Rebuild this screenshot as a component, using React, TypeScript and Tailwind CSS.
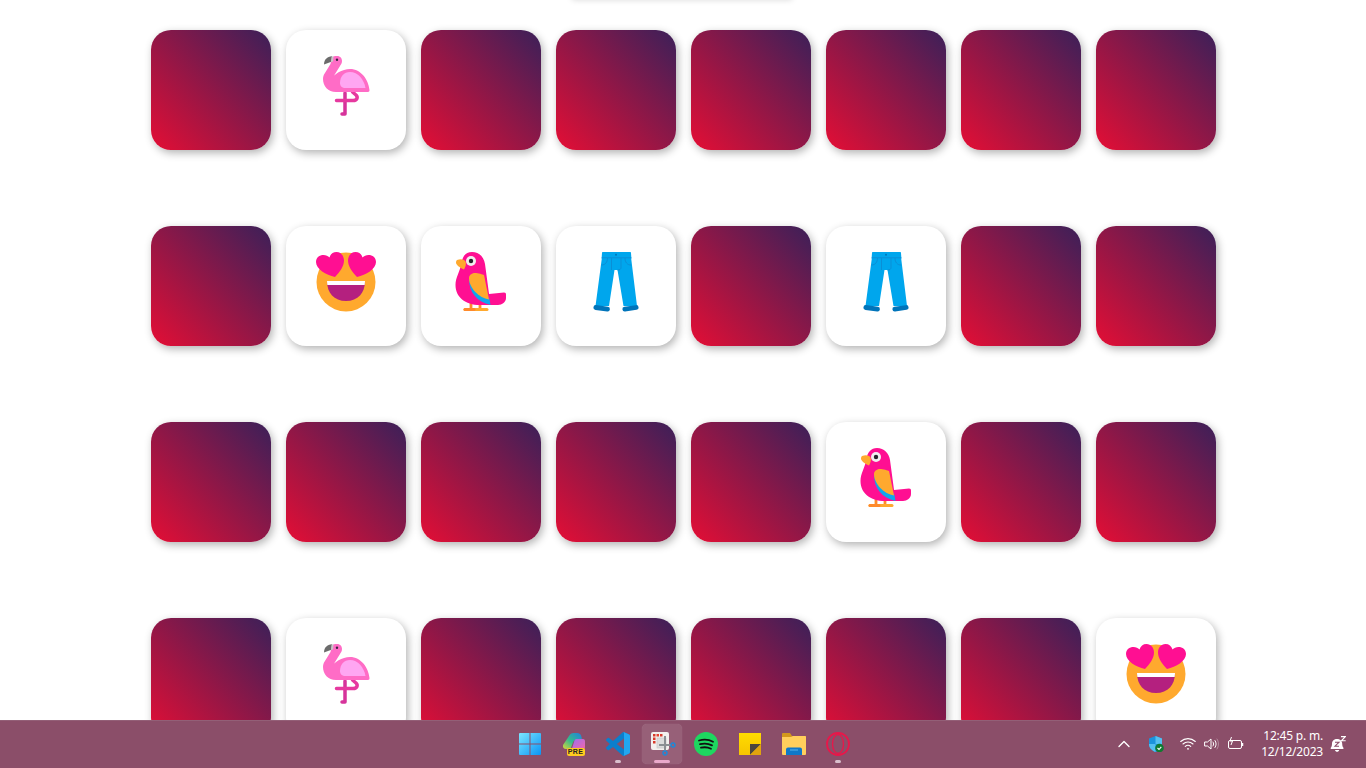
import React from "react";

const Flamingo = () => (
  <svg width="60" height="60" viewBox="0 0 60 60" fill="none">
    <path d="M29 37V58H26" stroke="#d6339b" strokeWidth="3.500" strokeLinecap="round" strokeLinejoin="round" />
    <path d="M20.500 44.500H37c4.500 0 5-3.500 3-5.500l-3.500-3" stroke="#e6399f" strokeWidth="3.500" strokeLinecap="round" strokeLinejoin="round" />
    <path d="M16 0.200C11 .5 8 3.500 8 8.500L16 5.500z" fill="#6b6b6b" />
    <path d="M14.500 24C18 18 26 13 34 13c11 0 18.500 10.500 19.500 21 .1 1.200-.5 2-1.500 2H20C12 36 7 30 7 23c0-2 .6-4 1.800-5.700L14.500 8 15.500 3c.5-2 2-3 4-3H21c3.500 0 5 2.500 5 5 0 2-1 3.500-2 5l-6.500 10.500c-1 1.500-1.800 2.500-3 3.500z" fill="#ff6cc6" />
    <path d="M24 27c0-6.500 4-11 10-11 8 0 14 7.500 15.500 16H29.500C26 32 24 30 24 27z" fill="#ffa6f2" />
    <path d="M15.500.8 17.500 0 17 5.500 15 6z" fill="#c9c9c9" />
    <circle cx="21" cy="3.700" r="1.200" fill="#3a2340" />
  </svg>
);

const HeartPath = "M19 25C10 23 0 17 0 10 0 5.500 3.500 3 7.500 3 10 3 12 4 13.500 5.500 14.500 2 17 0 20.500 0 25 0 28 4 28 8.500 28 14 24 20 19 25Z";

const Smiley = () => (
  <svg width="60" height="60" viewBox="0 0 60 60">
    <circle cx="30" cy="30" r="29.500" fill="#ffa92e" />
    <path d="M11 29h38c0 12-7 20-19 20S11 41 11 29z" fill="#b4207f" />
    <path d="M11 29h38l-.3 4H11.300z" fill="#fff" />
    <path d={HeartPath} fill="#ff0f92" />
    <path d={HeartPath} fill="#ff0f92" transform="translate(60 0) scale(-1 1)" />
  </svg>
);

const Parrot = () => (
  <svg width="60" height="60" viewBox="0 0 60 60">
    <path d="M20 50v7M29 50v7" stroke="#ff8a2b" strokeWidth="2.800" />
    <path d="M14 57.500h22" stroke="#ffa92e" strokeWidth="3" strokeLinecap="round" />
    <path d="M14 57.500h9" stroke="#ff8a2b" strokeWidth="3" strokeLinecap="round" />
    <path d="M38 42l15-1.500c1.500 0 2 .8 2 2V46c0 4-4 7-8 7H38z" fill="#ff0f92" />
    <path d="M21 0c7 0 12 5 13 12l5.500 41H29C14 53 4.500 45 4.500 33c0-8 4.500-13 6-22C11.500 4 15 0 21 0z" fill="#ff0f92" />
    <path d="M18 27c0 13 8 23 21.500 26l-1-6L24 27z" fill="#0fa5ee" />
    <path d="M18 26c0-3 3-5.500 7-5 4 .5 8 2 8 2l5 24.500C28 46 18 36 18 26z" fill="#ffa92e" />
    <path d="M6 8c3.500-1.500 7-1 8.500 1.500 1 2 .2 5-1.500 8C8.500 15.500 5 13 5 10.500c0-1 .3-1.900 1-2.500z" fill="#ffa92e" />
    <circle cx="20" cy="9" r="5" fill="#f1efef" />
    <circle cx="20" cy="9" r="2.200" fill="#26222a" />
  </svg>
);

const Jeans = () => (
  <svg width="60" height="60" viewBox="0 0 60 60">
    <path d="M16 5H45l6 49H37.500L31.500 18h-3L23 54H9.500z" fill="#00a6ed" />
    <path d="M16 1c0-.6.400-1 1-1h27c.6 0 1 .4 1 1l.4 5.500H15.600z" fill="#00a6ed" />
    <path d="M15.800 5.800H45.300" stroke="#0a8fd6" strokeWidth="1" />
    <circle cx="30" cy="2.800" r="1" fill="#0074ba" />
    <path d="M15.500 13c4 0 6-3 6-7M45 13c-4 0-6-3-6-7M25.500 6v12M35 6v9.500c0 1.500-1 2.500-3.500 2.500" stroke="#0a8fd6" strokeWidth="1" fill="none" />
    <path d="M9.800 55.500l11.700 1.700" stroke="#0074ba" strokeWidth="4.800" strokeLinecap="round" />
    <path d="M50.200 55.500l-11.400 1.700" stroke="#0074ba" strokeWidth="4.800" strokeLinecap="round" />
  </svg>
);

type E = "f" | "s" | "p" | "j" | null;
const rows: E[][] = [
  [null, "f", null, null, null, null, null, null],
  [null, "s", "p", "j", null, "j", null, null],
  [null, null, null, null, null, "p", null, null],
  [null, "f", null, null, null, null, null, "s"],
];

const Card = ({ e }: { e: E }) =>
  e ? (
    <div className="w-[120px] h-[120px] rounded-[20px] bg-white shadow-[2px_3px_8px_rgba(0,0,0,0.3)] pt-[26px] pl-[30px]">
      {e === "f" && <Flamingo />}
      {e === "s" && <Smiley />}
      {e === "p" && <Parrot />}
      {e === "j" && <Jeans />}
    </div>
  ) : (
    <div className="w-[120px] h-[120px] rounded-[20px] bg-[linear-gradient(45deg,#e40e35,#3b2059)] shadow-[2px_3px_8px_rgba(0,0,0,0.3)]" />
  );

const WinIcon = () => (
  <svg width="24" height="24" viewBox="0 0 24 24">
    <defs>
      <linearGradient id="w" x1="0" y1="0" x2="1" y2="1">
        <stop offset="0" stopColor="#7ce6ff" />
        <stop offset="1" stopColor="#0a94f5" />
      </linearGradient>
    </defs>
    <path d="M1 2a1 1 0 0 1 1-1h9.500v10.500H1zM12.500 1H22a1 1 0 0 1 1 1v9.500H12.500zM1 12.500h10.500V23H2a1 1 0 0 1-1-1zM12.500 12.500H23V22a1 1 0 0 1-1 1h-9.500z" fill="url(#w)" />
  </svg>
);

const CopilotIcon = () => (
  <div className="relative w-6 h-6">
    <svg width="24" height="24" viewBox="0 0 24 24" className="absolute left-0 top-0">
      <defs>
        <linearGradient id="c1" x1="0" y1="1" x2="1" y2="0">
          <stop offset="0" stopColor="#d9d63a" />
          <stop offset="0.45" stopColor="#35bb8c" />
          <stop offset="1" stopColor="#1f7fe0" />
        </linearGradient>
        <linearGradient id="c2" x1="0" y1="0" x2="1" y2="1">
          <stop offset="0" stopColor="#9a6ef0" />
          <stop offset="1" stopColor="#f566a8" />
        </linearGradient>
      </defs>
      <path d="M7 4C8 2 9.500 1 11.500 1H15c2.500 0 4 1.500 4.500 4L20 8H14c-1.500 0-2.500 1-3 2.500L8.500 17H4c-2 0-3.500-1.500-3-4z" fill="url(#c1)" />
      <path d="M14.500 7H21c1.500 0 2 1 2 2.500v5.500c0 2-1 3-2.500 3H9.500L12 10c.5-2 1.200-3 2.500-3z" fill="url(#c2)" />
    </svg>
    <div className="absolute left-[5px] top-[16px] w-[18px] h-[8px] rounded-[2px] bg-[#ffcb1f] text-[#222] text-[7px] leading-[8px] font-bold text-center tracking-[0.3px] [font-family:'Liberation_Sans',sans-serif]">
      PRE
    </div>
  </div>
);

const VSCode = () => (
  <svg width="24" height="24" viewBox="0 0 100 100">
    <path d="M96.500 10.800 75.900.9a6.200 6.200 0 0 0-7.100 1.200L29.400 38 12.200 25a4.200 4.200 0 0 0-5.300.2l-5.500 5a4.200 4.200 0 0 0 0 6.200L16.300 50 1.400 63.600a4.200 4.200 0 0 0 0 6.200l5.500 5a4.200 4.200 0 0 0 5.300.2l17.200-13 39.400 35.900a6.200 6.200 0 0 0 7.100 1.200l20.600-9.900a6.200 6.200 0 0 0 3.500-5.600V16.400a6.200 6.200 0 0 0-3.500-5.600zM75 72.700 45.100 50 75 27.300z" fill="#0b7fcc" />
    <path d="M68.800 2.100a6.200 6.200 0 0 1 7.100-1.200l20.600 9.900a6.200 6.200 0 0 1 3.500 5.600v67.200a6.200 6.200 0 0 1-3.500 5.600L75.900 99.100a6.200 6.200 0 0 1-7.100-1.200C73 102 75 100 75 96V4c0-4-2-4-6.200-1.900z" fill="#22a7f0" />
  </svg>
);

const Snip = () => (
  <svg width="26" height="26" viewBox="0 0 26 26">
    <rect x="1" y="1" width="18" height="18" rx="2" fill="#f3f0ee" />
    <rect x="3" y="3" width="2.500" height="2.500" fill="#d93a2b" />
    <rect x="6.500" y="3" width="2.500" height="2.500" fill="#e5432f" />
    <rect x="10" y="3" width="2.500" height="2.500" fill="#d93a2b" />
    <rect x="3" y="6.500" width="2.500" height="2.500" fill="#d93a2b" />
    <rect x="3" y="10" width="2.500" height="2.500" fill="#d93a2b" />
    <rect x="7" y="7" width="9" height="10" fill="#dcdcdc" stroke="#c4c4c4" strokeWidth=".6" />
    <path d="M15 5v15" stroke="#8b8f93" strokeWidth="2" />
    <path d="M9 14l12 0" stroke="#8b8f93" strokeWidth="2" />
    <circle cx="23" cy="14" r="2" fill="none" stroke="#1e88d8" strokeWidth="1.400" />
    <circle cx="15" cy="22" r="2" fill="none" stroke="#1e88d8" strokeWidth="1.400" />
  </svg>
);

const Spotify = () => (
  <svg width="24" height="24" viewBox="0 0 24 24">
    <circle cx="12" cy="12" r="12" fill="#1ed760" />
    <path d="M5 8.500c4.500-1.300 10-1 14 1.300M6 12.200c4-1 8.500-.7 12 1.200M7 15.700c3.500-.8 7-.5 10 1" stroke="#111" strokeWidth="1.800" strokeLinecap="round" fill="none" />
  </svg>
);

const Sticky = () => (
  <svg width="24" height="24" viewBox="0 0 24 24">
    <defs>
      <linearGradient id="st" x1="0" y1="0" x2="0" y2="1">
        <stop offset="0" stopColor="#ffdc00" />
        <stop offset="1" stopColor="#f6c400" />
      </linearGradient>
    </defs>
    <path d="M1 1h22v22H1z" fill="url(#st)" />
    <path d="M12 23V12h11L12 23z" fill="#4b473e" />
    <path d="M23 12v11H12z" fill="#e0a40e" />
  </svg>
);

const Folder = () => (
  <svg width="24" height="24" viewBox="0 0 24 24">
    <path d="M0 2a1 1 0 0 1 1-1h7l2 3h14v4H0z" fill="#d3981c" />
    <path d="M0 5h9l2-1h12a1 1 0 0 1 1 1v17a1 1 0 0 1-1 1H1a1 1 0 0 1-1-1z" fill="#ffcf5c" />
    <path d="M4 17.500a2 2 0 0 1 2-2h12a2 2 0 0 1 2 2V23H4z" fill="#0f78c8" />
    <path d="M8 18h8" stroke="#59b4ea" strokeWidth="1" />
  </svg>
);

const Opera = () => (
  <svg width="24" height="24" viewBox="0 0 24 24" fill="none" stroke="#e8174a">
    <circle cx="12" cy="12" r="11" strokeWidth="1.800" />
    <ellipse cx="12" cy="12" rx="5.500" ry="9.500" strokeWidth="1.300" />
  </svg>
);

const Slot = ({
  children,
  mark,
}: {
  children: React.ReactNode;
  mark?: "dot" | "active";
}) => (
  <div className="relative w-11 h-12 flex items-center justify-center">
    {mark === "active" && (
      <div className="absolute left-[2px] top-[4px] w-10 h-10 rounded-[5px] bg-white/10 shadow-[0_0_1px_rgba(255,255,255,0.3)]" />
    )}
    <div className="relative">{children}</div>
    {mark === "dot" && (
      <div className="absolute left-[19px] bottom-[5px] w-[6px] h-[3px] rounded-full bg-[#d9bfcc]" />
    )}
    {mark === "active" && (
      <div className="absolute left-[14px] bottom-[5px] w-4 h-[3px] rounded-full bg-[#eaa9cb]" />
    )}
  </div>
);

export default function App() {
  return (
    <div className="relative h-screen overflow-hidden bg-white [font-family:'Noto_Sans',sans-serif]">
      <div className="absolute left-[572px] top-[-40px] w-[220px] h-[40px] shadow-[0_0_6px_rgba(0,0,0,0.15)]" />
      <div className="grid grid-cols-[repeat(8,120px)] gap-x-[15px] gap-y-[76px] pl-[151px] pt-[30px]">
        {rows.flat().map((e, i) => (
          <Card key={i} e={e} />
        ))}
      </div>
      <div className="absolute left-0 right-0 bottom-0 h-12 grid grid-cols-[1fr_auto_1fr] bg-[#8b4e69] border-t border-[#9a6a80]/60 box-border">
        <div />
        <div className="flex -mt-px pl-px">
          <Slot><WinIcon /></Slot>
          <Slot><CopilotIcon /></Slot>
          <Slot mark="dot"><VSCode /></Slot>
          <Slot mark="active"><div className="w-[26px] translate-x-[1px]"><Snip /></div></Slot>
          <Slot><Spotify /></Slot>
          <Slot><Sticky /></Slot>
          <Slot><Folder /></Slot>
          <Slot mark="dot"><Opera /></Slot>
        </div>
        <div className="flex items-center justify-end pr-[20px] -mt-px text-white">
          <svg width="16" height="16" viewBox="0 0 16 16" fill="none" stroke="#fff" strokeWidth="1.400" strokeLinecap="round" strokeLinejoin="round">
            <path d="M3 10.500 8 5.500l5 5" />
          </svg>
          <svg className="ml-[16px]" width="16" height="16" viewBox="0 0 16 16">
            <path d="M1 2.500 7.500 0 14 2.500V8c0 4-3 6.500-6.500 8C4 14.500 1 12 1 8z" fill="#1b93dc" />
            <path d="M7.500 0 14 2.500V8H7.500zM1 8h6.500v8C4 14.500 1 12 1 8z" fill="#54c0f0" />
            <circle cx="11.500" cy="12" r="4.300" fill="#0f7b30" />
            <path d="M9.500 12l1.500 1.500 2.300-2.700" stroke="#fff" strokeWidth="1.100" fill="none" />
          </svg>
          <svg className="ml-[16px]" width="16" height="16" viewBox="0 0 16 16" fill="none" stroke="#fff" strokeWidth="1.100" strokeLinecap="round">
            <path d="M.7 5.500c4.200-3.800 10.400-3.800 14.600 0M3 8c2.900-2.600 7.100-2.600 10 0M5.300 10.400c1.600-1.400 3.800-1.400 5.400 0" />
            <circle cx="8" cy="12.800" r=".9" fill="#fff" stroke="none" />
          </svg>
          <svg className="ml-[8px]" width="16" height="16" viewBox="0 0 16 16" fill="none" stroke="#fff" strokeWidth="1" strokeLinejoin="round" strokeLinecap="round">
            <path d="M1 6h2.500L7 3v10L3.500 10H1z" />
            <path d="M9 6c.8 1.200.8 2.800 0 4M11 4.500c1.500 2 1.500 5 0 7" />
            <path d="M13 3c2 2.800 2 7.200 0 10" stroke="#ffffff" strokeOpacity="0.350" />
          </svg>
          <svg className="ml-[8px]" width="16" height="16" viewBox="0 0 16 16" fill="none" stroke="#fff" strokeWidth="1" strokeLinejoin="round">
            <rect x=".5" y="4.500" width="13" height="8" rx="1.500" />
            <path d="M14.500 7v3" strokeWidth="1.500" />
            <path d="M3.500 1 2 5h2.500L3 9" strokeWidth="1" />
          </svg>
          <div className="ml-[16px] w-[63px] mr-[7px] text-right text-[12px] leading-[16px] tracking-[-0.2px] text-white">
            <div>12:45 p. m.</div>
            <div>12/12/2023</div>
          </div>
          <svg width="16" height="16" viewBox="0 0 16 16" fill="#fff">
            <path d="M7 3c-2.800 0-5 2-5 4.800 0 2-.5 3-1.200 4-.4.500-.2 1.200.4 1.200h11.800c.6 0 .8-.7.400-1.200-.7-1-1.200-2-1.200-4C12.200 5 9.800 3 7 3z" />
            <path d="M5 14h4.200c-.2 1.100-1.100 1.800-2.100 1.800S5.200 15.100 5 14z" />
            <path d="M5 6.200h4L5 10.200h4" stroke="#8b4e69" strokeWidth="1.100" fill="none" />
            <path d="M11 .6h4.300l-3.900 4.200h4.300" stroke="#fff" strokeWidth="1.100" fill="none" />
          </svg>
        </div>
      </div>
    </div>
  );
}
